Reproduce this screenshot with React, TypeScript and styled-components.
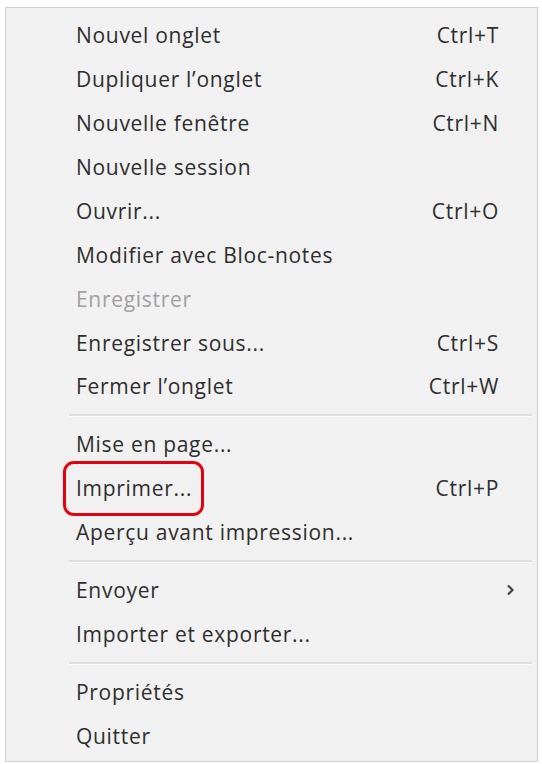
import React from "react";
import styled, { createGlobalStyle } from "styled-components";

const Global = createGlobalStyle`
  html, body {
    margin: 0;
    padding: 0;
    background: #ffffff;
  }
  body {
    font-family: "Open Sans", "Noto Sans", "Liberation Sans", sans-serif;
  }
`;

const Page = styled.div`
  width: 542px;
  height: 764px;
  padding: 7px 0 0 5px;
  box-sizing: border-box;
`;

const Panel = styled.div`
  width: 533px;
  height: 755px;
  box-sizing: border-box;
  background: #f1f1f1;
  border: 1px solid #cfcfcf;
  padding: 5px 0 3px 0;
  display: flex;
  flex-direction: column;
`;

const Row = styled.div<{ $disabled?: boolean; $submenu?: boolean }>`
  height: 44px;
  display: grid;
  grid-template-columns: 1fr auto;
  align-items: center;
  padding: 0 ${(p) => (p.$submenu ? "22px" : "38px")} 0 70px;
  font-size: 21px;
  font-weight: 500;
  color: ${(p) => (p.$disabled ? "#a0a0a0" : "#2e2e2e")};
  letter-spacing: 0.7px;
`;

const Label = styled.span<{ $highlight?: boolean }>`
  position: relative;
  justify-self: start;
  ${(p) =>
    p.$highlight &&
    `
    &::before {
      content: "";
      position: absolute;
      left: -13px;
      right: -12px;
      top: -13px;
      bottom: -14px;
      border: 3px solid #e3000f;
      border-radius: 11px;
    }
  `}
`;

const Shortcut = styled.span`
  text-align: right;
`;

const Arrow = styled.span`
  display: flex;
  align-items: center;
`;

const Separator = styled.div`
  height: 14px;
  display: flex;
  align-items: center;
  padding: 0 5px 0 63px;
  &::after {
    content: "";
    flex: 1;
    height: 2px;
    background: #dedede;
    border-bottom: 1px solid #fbfbfb;
  }
`;

type Item = {
  label: string;
  shortcut?: string;
  disabled?: boolean;
  highlight?: boolean;
  submenu?: boolean;
};

const groups: Item[][] = [
  [
    { label: "Nouvel onglet", shortcut: "Ctrl+T" },
    { label: "Dupliquer l’onglet", shortcut: "Ctrl+K" },
    { label: "Nouvelle fenêtre", shortcut: "Ctrl+N" },
    { label: "Nouvelle session" },
    { label: "Ouvrir...", shortcut: "Ctrl+O" },
    { label: "Modifier avec Bloc-notes" },
    { label: "Enregistrer", disabled: true },
    { label: "Enregistrer sous...", shortcut: "Ctrl+S" },
    { label: "Fermer l’onglet", shortcut: "Ctrl+W" },
  ],
  [
    { label: "Mise en page..." },
    { label: "Imprimer...", shortcut: "Ctrl+P", highlight: true },
    { label: "Aperçu avant impression..." },
  ],
  [{ label: "Envoyer", submenu: true }, { label: "Importer et exporter..." }],
  [{ label: "Propriétés" }, { label: "Quitter" }],
];

const Chevron = () => (
  <svg width="9" height="12" viewBox="0 0 9 12">
    <path d="M2 1.5 L6.5 6 L2 10.5" fill="none" stroke="#444" strokeWidth="2.2" />
  </svg>
);

export default function App() {
  return (
    <>
      <Global />
      <Page>
        <Panel>
          {groups.map((g, gi) => (
            <React.Fragment key={gi}>
              {gi > 0 && <Separator />}
              {g.map((it) => (
                <Row key={it.label} $disabled={it.disabled} $submenu={it.submenu}>
                  <Label $highlight={it.highlight}>{it.label}</Label>
                  {it.shortcut && <Shortcut>{it.shortcut}</Shortcut>}
                  {it.submenu && (
                    <Arrow>
                      <Chevron />
                    </Arrow>
                  )}
                </Row>
              ))}
            </React.Fragment>
          ))}
        </Panel>
      </Page>
    </>
  );
}
